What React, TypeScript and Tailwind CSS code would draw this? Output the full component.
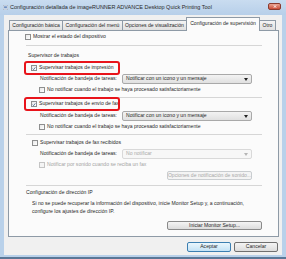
function CheckBox({ checked = false, disabled = false }: { checked?: boolean; disabled?: boolean }) {
  return (
    <span
      className={
        "relative flex h-[6px] w-[6px] shrink-0 items-center justify-center border " +
        (disabled ? "border-[#c4c4c4] bg-[#f4f4f4]" : "border-[#8e8f8f] bg-gradient-to-br from-[#e8e8e8] to-[#ffffff]")
      }
    >
      {checked && (
        <svg viewBox="0 0 6 6" className="h-[5px] w-[5px]">
          <path d="M1 3.2 L2.4 4.6 L5 1.3" fill="none" stroke="#2b4f7e" strokeWidth="1.1" />
        </svg>
      )}
    </span>
  );
}

function Check({
  label,
  checked,
  disabled,
  className = "",
}: {
  label: string;
  checked?: boolean;
  disabled?: boolean;
  className?: string;
}) {
  return (
    <div className={"flex items-center gap-[2px] " + className}>
      <CheckBox checked={checked} disabled={disabled} />
      <span className={"whitespace-nowrap " + (disabled ? "text-[#a3a3a3]" : "text-[#1f1f1f]")}>{label}</span>
    </div>
  );
}

function Combo({ value, disabled = false, className = "" }: { value: string; disabled?: boolean; className?: string }) {
  return (
    <div
      className={
        "flex w-[130px] items-center justify-between rounded-[2px] border pl-[3px] pr-[3px] " +
        (disabled
          ? "border-[#d9d9d9] bg-[#f7f7f7] text-[#a9a9a9]"
          : "border-[#a9a9a9] bg-gradient-to-b from-[#f3f3f3] to-[#e0e0e0] text-[#1f1f1f]") +
        " " +
        className
      }
    >
      <span className="whitespace-nowrap">{value}</span>
      <svg viewBox="0 0 4 3" className="h-[3px] w-[4px]">
        <path d="M0 0 H4 L2 3 Z" fill={disabled ? "#b5b5b5" : "#222"} />
      </svg>
    </div>
  );
}

function NotifRow({ value, disabled, className = "" }: { value: string; disabled?: boolean; className?: string }) {
  return (
    <div className={"flex items-center " + className}>
      <span className="w-[113px] shrink-0 whitespace-nowrap pl-[31px] text-[#1f1f1f]">
        Notificación de bandeja de tareas:
      </span>
      <Combo value={value} disabled={disabled} className="h-[10px]" />
    </div>
  );
}

function Sep({ className = "" }: { className?: string }) {
  return <div className={"ml-[17px] w-[236px] border-t border-[#d6d6d6] " + className} />;
}

function Highlight({ children, className = "" }: { children: React.ReactNode; className?: string }) {
  return (
    <div className={"relative ml-[15px] flex h-[14px] w-[96px] items-center overflow-hidden pl-[7px] " + className}>
      {children}
      <div className="pointer-events-none absolute inset-0 rounded-[3px] border-2 border-[#e8141b]" />
    </div>
  );
}

export default function App() {
  const tabs = [
    { t: "Configuración básica", w: "w-[54px]" },
    { t: "Configuración del menú", w: "w-[61px]" },
    { t: "Opciones de visualización", w: "w-[65px]" },
  ];
  return (
    <div
      className="flex h-[259px] w-[286px] flex-col overflow-hidden bg-[#b9d1ea] text-[5.1px] leading-none"
      style={{ fontFamily: '"Liberation Sans", Arial, sans-serif' }}
    >
      {/* title bar */}
      <div className="flex h-[15px] shrink-0 items-center bg-gradient-to-b from-[#c9dcf0] to-[#b7cfe9] pl-[3px] pr-[5px]">
        <svg viewBox="0 0 6 6" className="h-[5px] w-[5px]">
          <rect x="0" y="0" width="6" height="6" fill="#e9eef5" stroke="#7f94ad" strokeWidth="0.8" />
          <rect x="1.3" y="1.5" width="3.4" height="2.5" fill="#6d8fc1" />
        </svg>
        <span className="ml-[2px] whitespace-nowrap text-[5.5px] text-[#2a2a2a]">
          Configuración detallada de imageRUNNER ADVANCE Desktop Quick Printing Tool
        </span>
        <div className="ml-auto mt-[-3px] flex h-[7px] w-[13px] items-center justify-center rounded-[2px] border border-[#8a3b2f] bg-gradient-to-b from-[#e8a493] to-[#c94b36]">
          <svg viewBox="0 0 5 4" className="h-[3px] w-[4px]">
            <path d="M0.5 0.3 L4.5 3.7 M4.5 0.3 L0.5 3.7" stroke="#fff" strokeWidth="1" />
          </svg>
        </div>
      </div>

      {/* client */}
      <div className="mx-[4px] flex h-[240px] flex-col bg-[#f0f0f0]">
        {/* tabs */}
        <div className="ml-[5px] mt-[1px] flex h-[15px] items-end">
          {tabs.map((tab) => (
            <div
              key={tab.t}
              className={
                "-ml-px flex h-[11px] items-center justify-center whitespace-nowrap border border-b-0 border-[#8e9aa6] bg-gradient-to-b from-[#f4f4f4] to-[#dedede] text-[#1f1f1f] first:ml-0 " +
                tab.w
              }
            >
              {tab.t}
            </div>
          ))}
          <div className="relative z-10 -ml-px flex h-[14px] w-[74px] items-center justify-center whitespace-nowrap border border-b-0 border-[#8e9aa6] bg-[#fbfbfb] pb-[1px] text-[#1f1f1f]">
            Configuración de supervisión
          </div>
          <div className="-ml-px flex h-[11px] w-[17px] items-center justify-center border border-b-0 border-[#8e9aa6] bg-gradient-to-b from-[#f4f4f4] to-[#dedede] text-[#1f1f1f]">
            Otro
          </div>
        </div>

        {/* panel */}
        <div className="ml-[4px] -mt-px flex h-[207px] w-[271px] flex-col border border-[#8e9aa6] bg-[#fbfbfb]">
          <Check label="Mostrar el estado del dispositivo" className="ml-[16px] mt-[2px] h-[8px]" />
          <Sep className="mt-[4px]" />
          <div className="ml-[19px] mt-[7px] h-[8px] text-[#1f1f1f]">Supervisor de trabajos</div>
          <Highlight>
            <Check label="Supervisar trabajos de impresión" checked />
          </Highlight>
          <NotifRow value="Notificar con un icono y un mensaje" className="mt-[-1px] h-[10px]" />
          <Check
            label="No notificar cuando el trabajo se haya procesado satisfactoriamente"
            className="ml-[30px] mt-[2px] h-[8px]"
          />
          <Sep className="mt-[3px]" />
          <Highlight className="mt-[-1px]">
            <Check label="Supervisar trabajos de envío de fax" checked />
          </Highlight>
          <NotifRow value="Notificar con un icono y un mensaje" className="h-[10px]" />
          <Check
            label="No notificar cuando el trabajo se haya procesado satisfactoriamente"
            className="ml-[30px] mt-[2px] h-[8px]"
          />
          <Sep className="mt-[3px]" />
          <Check label="Supervisar trabajos de fax recibidos" className="ml-[23px] mt-[4px] h-[8px]" />
          <NotifRow value="No notificar" disabled className="mt-[2px] h-[10px]" />
          <Check label="Notificar por sonido cuando se reciba un fax" disabled className="ml-[30px] mt-[2px] h-[8px]" />
          <div className="ml-[158px] mt-[2px] flex h-[9px] w-[85px] items-center justify-center whitespace-nowrap rounded-[2px] border border-[#c9cdd0] bg-[#f4f4f4] text-[#a8a8a8]">
            Opciones de notificación de sonido...
          </div>
          <Sep className="mt-[5px]" />
          <div className="ml-[17px] mt-[4px] h-[8px] text-[#1f1f1f]">Configuración de dirección IP</div>
          <div className="ml-[23px] mt-[1px] leading-[8px] text-[#1f1f1f]">
            <div className="whitespace-nowrap">
              Si no se puede recuperar la información del dispositivo, inicie Monitor Setup y, a continuación,
            </div>
            <div className="whitespace-nowrap">configure los ajustes de dirección IP.</div>
          </div>
          <div className="ml-[158px] mt-[6px] flex h-[9px] w-[95px] items-center justify-center whitespace-nowrap rounded-[2px] border border-[#8a8a8a] bg-gradient-to-b from-[#f4f4f4] to-[#dcdcdc] text-[#1f1f1f]">
            Iniciar Monitor Setup...
          </div>
        </div>

        {/* buttons */}
        <div className="mt-[5px] flex justify-end gap-[3px] pr-[4px]">
          <div className="flex h-[10px] w-[44px] items-center justify-center rounded-[2px] border border-[#3c7fb1] bg-gradient-to-b from-[#eaf6fd] to-[#c4e2f5] text-[#1f1f1f]">
            Aceptar
          </div>
          <div className="flex h-[10px] w-[44px] items-center justify-center rounded-[2px] border border-[#707070] bg-gradient-to-b from-[#f4f4f4] to-[#dcdcdc] text-[#1f1f1f]">
            Cancelar
          </div>
        </div>
      </div>
      <div className="mt-auto h-[2px] bg-[#5a7796]" />
    </div>
  );
}
